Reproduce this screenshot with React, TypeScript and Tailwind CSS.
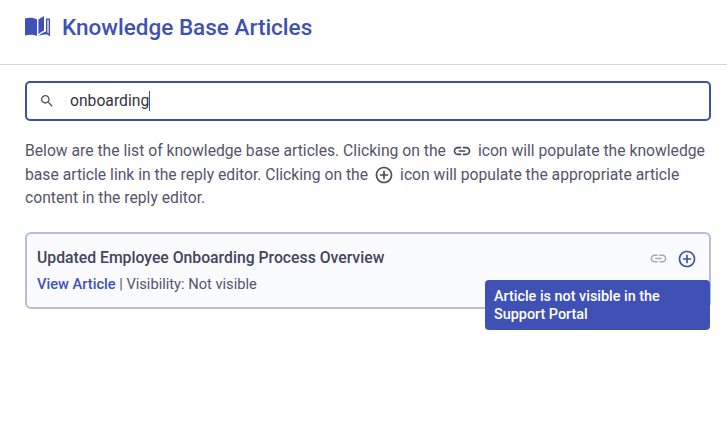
function LinkIcon({ className }: { className?: string }) {
  return (
    <svg viewBox="0 0 24 24" fill="currentColor" className={className}>
      <path d="M3.9 12c0-1.71 1.39-3.1 3.1-3.1h4V7H7c-2.76 0-5 2.24-5 5s2.24 5 5 5h4v-1.9H7c-1.71 0-3.1-1.39-3.1-3.1zM8 13h8v-2H8v2zm9-6h-4v1.9h4c1.71 0 3.1 1.39 3.1 3.1s-1.39 3.1-3.1 3.1h-4V17h4c2.76 0 5-2.24 5-5s-2.24-5-5-5z" />
    </svg>
  )
}

function PlusCircle({ className }: { className?: string }) {
  return (
    <svg viewBox="0 0 24 24" fill="currentColor" className={className}>
      <path d="M13 7h-2v4H7v2h4v4h2v-4h4v-2h-4V7zm-1-5C6.48 2 2 6.48 2 12s4.48 10 10 10 10-4.48 10-10S17.52 2 12 2zm0 18c-4.41 0-8-3.59-8-8s3.59-8 8-8 8 3.59 8 8-3.59 8-8 8z" />
    </svg>
  )
}

function SearchIcon({ className }: { className?: string }) {
  return (
    <svg viewBox="0 0 24 24" fill="currentColor" className={className}>
      <path d="M15.5 14h-.79l-.28-.27C15.41 12.59 16 11.11 16 9.5 16 5.91 13.09 3 9.5 3S3 5.91 3 9.5 5.91 16 9.5 16c1.61 0 3.09-.59 4.23-1.57l.27.28v.79l5 4.99L20.49 19l-4.99-5zm-6 0C7.01 14 5 11.99 5 9.5S7.01 5 9.5 5 14 7.01 14 9.5 11.99 14 9.5 14z" />
    </svg>
  )
}

function BookIcon({ className }: { className?: string }) {
  return (
    <svg viewBox="0 0 25 21" fill="currentColor" className={className}>
      <path d="M0 2.6 C4 1.2 8.5 1.4 12 3.4 V20 C8.5 18.4 4 18.2 0 19.4 Z" />
      <path d="M13.4 3.4 L19 0 V14.6 C16.8 15.6 15 16.8 13.4 18.4 Z" />
      <path d="M21 2.4 H25 V20 H23.6 V18.9 C20 18.2 16.6 18.8 13.4 20 C15.6 18 18.2 16.6 21 15.6 Z M22.4 3.8 V16.6 L23.6 17.4 V3.8 Z" fillRule="evenodd" />
    </svg>
  )
}

export default function App() {
  return (
    <div className="h-[446px] w-[727px] bg-white font-['Roboto',sans-serif] overflow-hidden">
      {/* Header */}
      <div className="flex h-[65px] items-start gap-[12px] border-b border-[#d4d4d4] pl-[25px] pt-[14px]">
        <BookIcon className="mt-[2px] h-[21px] w-[25px] text-[#3f51b5]" />
        <h1 className="text-[22.5px] font-medium leading-[26px] text-[#3f51b5]">Knowledge Base Articles</h1>
      </div>

      <div className="pl-[25px] pr-[16px] pt-[16px]">
        {/* Search */}
        <div className="flex h-[40px] items-center rounded-[5px] border-2 border-[#3f51a5] pl-[12px]">
          <SearchIcon className="h-[16px] w-[16px] text-[#55555f]" />
          <span className="ml-[15px] text-[15.7px] leading-none text-[#33333d]">onboarding</span>
          <span className="h-[20px] w-px bg-[#3f51a5]" />
        </div>

        {/* Description */}
        <p className="mt-[18px] text-[15.7px] leading-[23.5px] text-[#55556a]">
          Below are the list of knowledge base articles. Clicking on the
          <LinkIcon className="ml-[6px] mr-[6px] inline-block h-[20px] w-[20px] align-[-5px] text-[#4a4a5e]" />
          icon will populate the knowledge base article link in the reply editor. Clicking on the
          <PlusCircle className="mx-[6px] inline-block h-[20px] w-[20px] align-[-5px] text-[#4a4a5e]" />
          icon will populate the appropriate article content in the reply editor.
        </p>

        {/* Article card */}
        <div className="relative mt-[22px] flex h-[77px] items-start justify-between rounded-[6px] border-2 border-[#b9bedb] bg-[#fafbff] pl-[10px] pr-[12px] pt-[14px]">
          <div>
            <div className="text-[15.75px] font-medium leading-[20px] text-[#44445a]">Updated Employee Onboarding Process Overview</div>
            <div className="mt-[6px] text-[14.65px] leading-[20px] text-[#55556a]">
              <a className="font-medium text-[#3f51b5]">View Article</a> | Visibility: Not visible
            </div>
          </div>
          <div className="mt-[1px] flex items-center gap-[9px]">
            <LinkIcon className="h-[19px] w-[19px] text-[#a9a9b3]" />
            <PlusCircle className="h-[20px] w-[20px] text-[#3f51a5]" />
          </div>
          <div className="absolute left-[458px] top-[46px] w-[225px] rounded-[4px] bg-[#3f51b5] px-[9px] pb-[6px] pt-[8px] text-[14.4px] font-medium leading-[18px] text-white">
            Article is not visible in the Support Portal
          </div>
        </div>
      </div>
    </div>
  )
}
